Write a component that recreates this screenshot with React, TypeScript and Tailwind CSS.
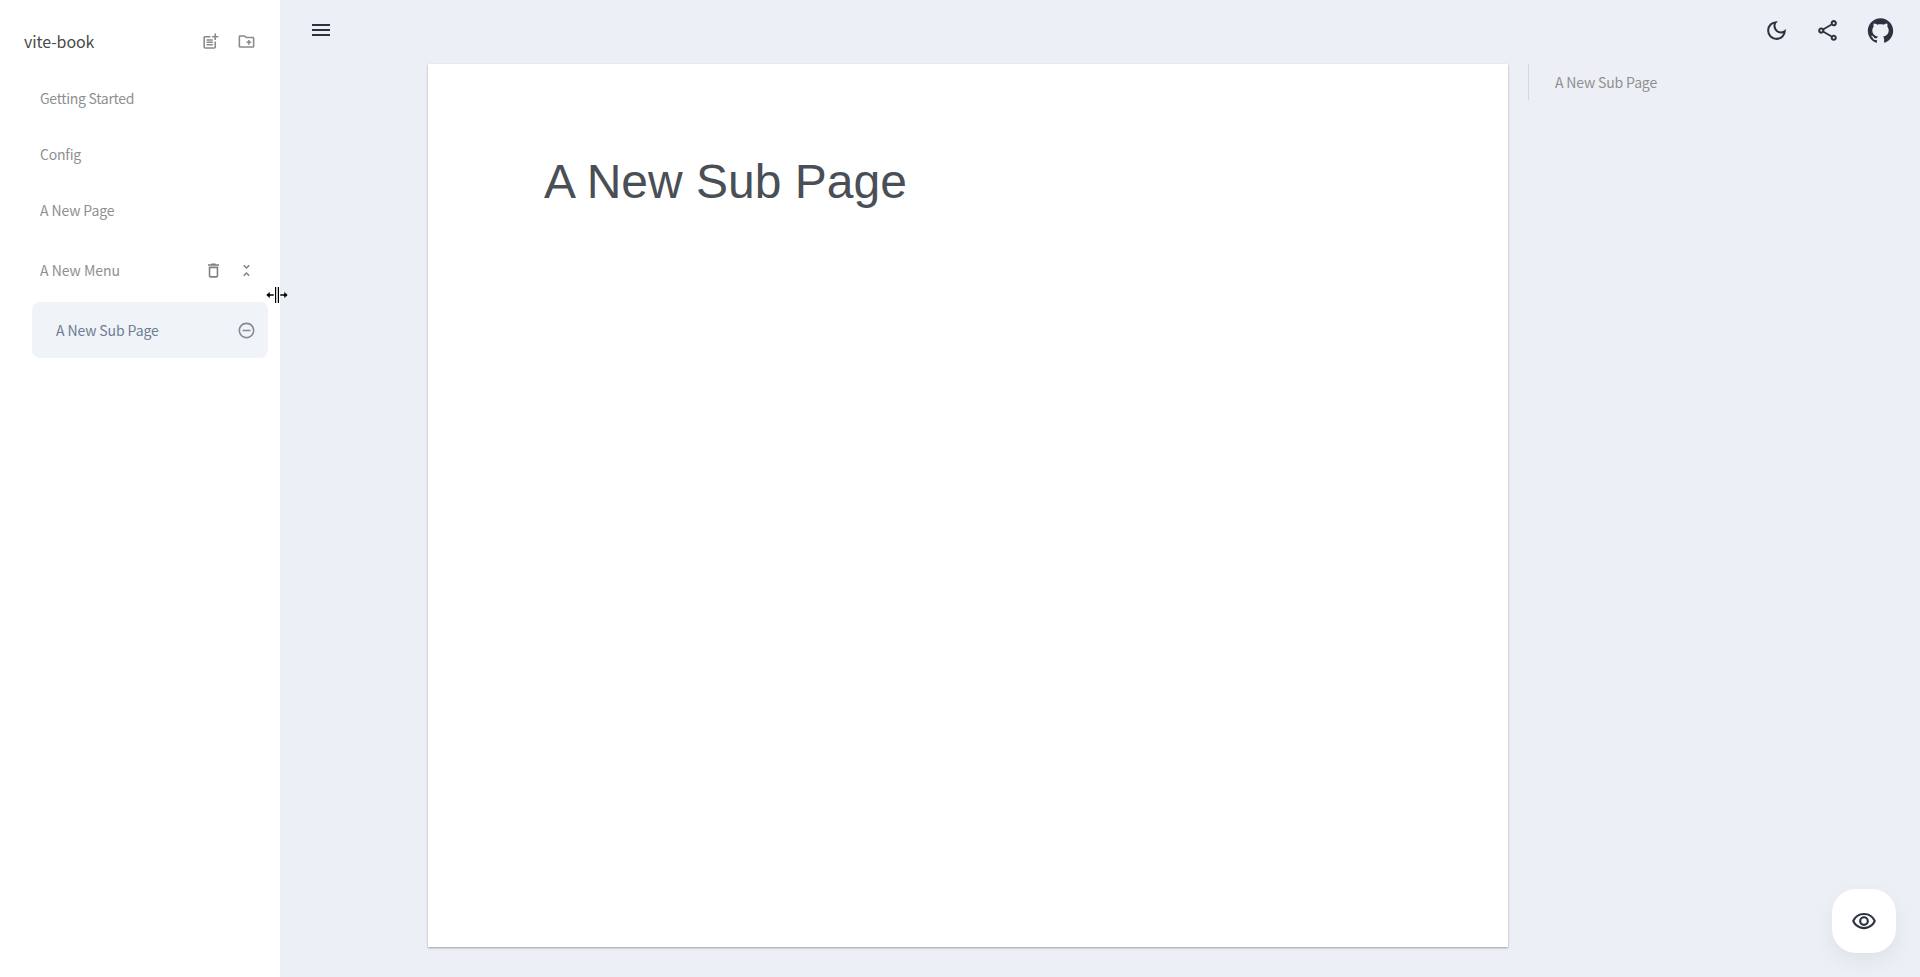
import React from "react";
import { MdOutlinePostAdd, MdOutlineCreateNewFolder, MdOutlineDelete, MdUnfoldLess, MdRemoveCircleOutline, MdMenu, MdOutlineDarkMode, MdOutlineShare, MdOutlineRemoveRedEye } from "react-icons/md";
import { AiFillGithub } from "react-icons/ai";

const font = "font-['Noto_Sans_CJK_SC','Noto_Sans',sans-serif]";

function NavItem({ label, className }: { label: string; className?: string }) {
  return (
    <div className={`flex h-14 items-center justify-between pl-10 pr-[26px] text-sm text-[#8f8f8f] ${className ?? ""}`}>
      <span>{label}</span>
    </div>
  );
}

function CursorResize() {
  return (
    <svg width="24" height="16" viewBox="0 0 24 16" className="absolute left-[265px] top-[287px]">
      <path d="M1 8 L5 4.5 V7 H9 V9 H5 V11.5 Z" fill="#000" stroke="#fff" strokeWidth="0.5" />
      <path d="M23 8 L19 4.5 V7 H15 V9 H19 V11.5 Z" fill="#000" stroke="#fff" strokeWidth="0.5" />
      <rect x="10" y="0" width="1.2" height="16" fill="#000" />
      <rect x="12.8" y="0" width="1.2" height="16" fill="#000" />
    </svg>
  );
}

export default function App() {
  return (
    <div className={`relative flex h-[977px] w-full overflow-hidden bg-[#ecf0f6] ${font}`}>
      <aside className="flex w-[280px] shrink-0 flex-col bg-white">
        <div className="flex h-[70px] items-center justify-between pt-3 pl-6 pr-[24px]">
          <span className="text-base tracking-[-0.1px] text-[#4a4a4a]">vite-book</span>
          <div className="flex items-center gap-[17px] text-[#8a8a8a]">
            <MdOutlinePostAdd size={19} />
            <MdOutlineCreateNewFolder size={19} />
          </div>
        </div>
        <NavItem label="Getting Started" className="tracking-[-0.3px]" />
        <NavItem label="Config" className="tracking-[-0.2px]" />
        <NavItem label="A New Page" className="tracking-[-0.1px]" />
        <div className="flex h-[64px] items-center justify-between pl-10 pr-[25px] text-sm text-[#8f8f8f]">
          <span>A New Menu</span>
          <div className="flex items-center gap-[15px] text-[#808080]">
            <MdOutlineDelete size={19} />
            <MdUnfoldLess size={17} />
          </div>
        </div>
        <div className="ml-8 mr-3 flex h-14 items-center justify-between rounded-lg bg-[#f0f3f7] pl-6 pr-[12px] text-sm tracking-[-0.1px] text-[#6f7c94]">
          <span>A New Sub Page</span>
          <MdRemoveCircleOutline size={19} className="text-[#808a98]" />
        </div>
      </aside>

      <main className="flex min-w-0 flex-1 flex-col">
        <header className="flex h-16 shrink-0 items-start justify-between pl-[29px] pr-[25px] pt-[16px] text-[#2b3340]">
          <div className="pt-[2px]"><MdMenu size={24} /></div>
          <div className="flex items-center gap-[26px]">
            <MdOutlineDarkMode size={25} />
            <MdOutlineShare size={25} />
            <AiFillGithub size={29} />
          </div>
        </header>
        <div className="flex">
          <article className="ml-[148px] h-[883px] w-[1080px] bg-white px-[116px] pt-[90px] shadow-[0_1px_2px_rgba(0,0,0,0.35)]">
            <h1 className="font-['Liberation_Sans',sans-serif] text-5xl leading-[56px] text-[#4a4f57]">A New Sub Page</h1>
          </article>
          <nav className="ml-5 h-9 border-l border-[#d5d9df] pl-[26px] text-sm leading-9 tracking-[-0.15px] text-[#8f8f8f]">A New Sub Page</nav>
        </div>
      </main>

      <button className="absolute left-[1832px] top-[889px] flex h-16 w-16 items-center justify-center rounded-[24px] bg-white text-[#2b3340] shadow-[0_8px_20px_rgba(0,0,0,0.06)]">
        <MdOutlineRemoveRedEye size={26} />
      </button>
      <CursorResize />
    </div>
  );
}
